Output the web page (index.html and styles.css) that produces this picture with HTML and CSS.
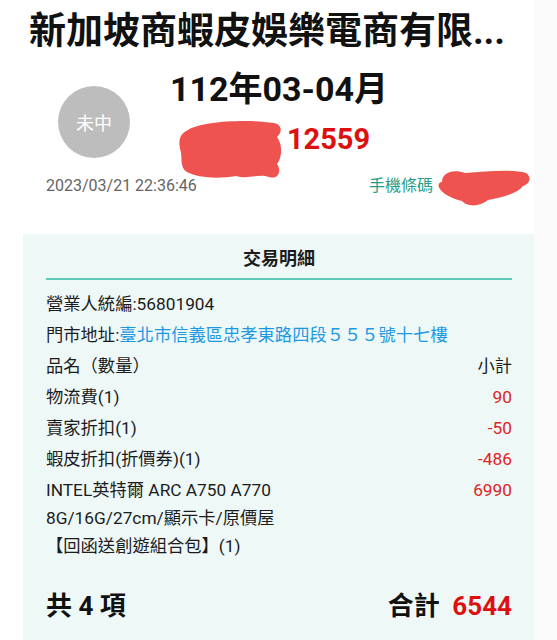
FILE: index.html
```html
<!DOCTYPE html>
<html lang="zh-Hant">
<head>
    <meta charset="UTF-8">
    <meta name="viewport" content="width=device-width, initial-scale=1.0">
    <title>發票明細</title>
    <link rel="stylesheet" href="styles.css">
</head>
<body>
<div class="page">
    <h1 class="seller">新加坡商蝦皮娛樂電商有限...</h1>

    <div class="summary">
        <div class="badge">未中</div>
        <div class="info">
            <div class="period">112年03-04月</div>
            <div class="invoice-no">
                <!-- redacted part of the invoice number -->
                <svg class="mask mask-no" width="105" height="62" viewBox="0 0 105 62">
                    <path d="M10 12 C24 3 70 1 96 5 C105 7 104 15 99 19 C105 27 104 40 99 46 C104 53 100 62 91 59 C80 55 70 62 58 58 C40 61 20 60 9 54 C1 49 5 39 2 31 C0 21 3 15 10 12 Z" fill="#ef5350"/>
                </svg>12559
            </div>
        </div>
    </div>

    <div class="meta">
        <span class="date">2023/03/21 22:36:46</span>
        <span class="carrier">手機條碼
            <svg class="mask mask-carrier" width="93" height="40" viewBox="0 0 93 40">
                <path d="M5 15 C5 5 17 2 28 6 C50 4 78 2 89 6 C95 10 93 17 86 19 C80 27 62 31 51 33 C43 40 30 40 25 34 C17 32 7 28 3 22 C0 18 2 15 5 15 Z" fill="#ef5350"/>
            </svg>
        </span>
    </div>

    <div class="details">
        <h2 class="details-title">交易明細</h2>
        <div class="rows">
            <div class="row">營業人統編:56801904</div>
            <div class="row">門市地址:<span class="address">臺北市信義區忠孝東路四段５５５號十七樓</span></div>
            <div class="row item"><span>品名（數量）</span><span class="head-price">小計</span></div>
            <div class="row item"><span>物流費(1)</span><span class="price">90</span></div>
            <div class="row item"><span>賣家折扣(1)</span><span class="price">-50</span></div>
            <div class="row item"><span>蝦皮折扣(折價券)(1)</span><span class="price">-486</span></div>
            <div class="row item"><span class="name">INTEL英特爾 ARC A750 A770 8G/16G/27cm/顯示卡/原價屋【回函送創遊組合包】(1)</span><span class="price">6990</span></div>
        </div>
        <div class="total">
            <span>共 4 項</span>
            <span>合計 <span class="total-amount">6544</span></span>
        </div>
    </div>
</div>
</body>
</html>
```

FILE: styles.css
```css
body {
    margin: 0;
    background-color: #fafafa;
    font-family: Roboto, "Noto Sans CJK TC", sans-serif;
    color: #1c1c1c;
}
.page {
    width: 534px;
    background: white;
    padding-top: 8px;
    min-height: 632px;
}
.seller {
    margin: 0;
    font-size: 37px;
    line-height: 48px;
    font-weight: bold;
    color: #111;
    text-align: center;
    white-space: nowrap;
}
.summary {
    display: flex;
    gap: 20px;
    margin-top: 10px;
}
.badge {
    margin-left: 58px;
    margin-top: 20px;
    width: 72px;
    height: 72px;
    border-radius: 50%;
    background-color: #bdbdbd;
    color: white;
    font-size: 18px;
    display: flex;
    align-items: center;
    justify-content: center;
}
.info {
    width: 258px;
    text-align: center;
}
.period {
    font-size: 34px;
    line-height: 46px;
    font-weight: bold;
    color: #111;
}
.invoice-no {
    margin-top: 6px;
    padding-right: 10px;
    font-size: 29px;
    line-height: 42px;
    font-weight: bold;
    color: #dd1010;
    white-space: nowrap;
}
.mask {
    display: inline-block;
}
.mask-no {
    vertical-align: top;
    margin: 0 4px -20px 0;
}
.meta {
    display: flex;
    justify-content: space-between;
    align-items: center;
    margin-top: 14px;
    padding: 0 4px 0 46px;
    font-size: 16px;
    line-height: 24px;
}
.date {
    color: #646464;
}
.carrier {
    color: #2a9d88;
}
.mask-carrier {
    vertical-align: middle;
    margin: -8px 0 -8px 0;
}
.details {
    margin: 35px 0 0 23px;
    padding: 12px 22px 30px 23px;
    background-color: #edf8f7;
    font-size: 17.3px;
}
.details-title {
    margin: 0;
    padding-bottom: 6px;
    border-bottom: 2px solid #5ccab6;
    font-size: 18px;
    line-height: 26px;
    font-weight: bold;
    text-align: center;
    color: #1c1c1c;
}
.rows {
    padding-top: 7px;
}
.row {
    margin-top: 3px;
    line-height: 28px;
}
.item {
    display: flex;
    justify-content: space-between;
    gap: 20px;
}
.address {
    color: #1f98e4;
}
.name {
    max-width: 260px;
}
.price {
    color: #e02424;
}
.total {
    display: flex;
    justify-content: space-between;
    margin-top: 28px;
    font-size: 26px;
    line-height: 36px;
    font-weight: bold;
    color: #111;
}
.total-amount {
    color: #dd1010;
    margin-left: 6px;
}
```
